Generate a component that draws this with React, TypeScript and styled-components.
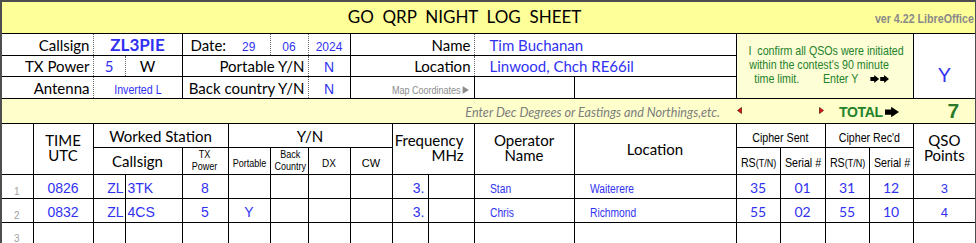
import React from "react";
import styled, { createGlobalStyle, css } from "styled-components";

const CAL = `"Lato", "Carlito", "Open Sans", sans-serif`;
const ARIAL = `"Liberation Sans", Arial, sans-serif`;
const BLUE = "#3131f2";
const GREEN = "#23822a";

type Origin = "left" | "center" | "right";

// Arial Narrow is not installed: squeeze Liberation Sans instead
const narrow = (origin: Origin = "center") => css`
  display: inline-block;
  font-family: ${ARIAL};
  transform: scaleX(0.82);
  transform-origin: ${origin} center;
`;

const GlobalStyle = createGlobalStyle`
  body {
    margin: 0;
    background: #fff;
    font-family: ${CAL};
  }
`;

type Edge = "solid" | "dot" | "none";
type Align = "left" | "center" | "right";

const edge = (e: Edge = "solid") =>
  e === "none" ? "none" : e === "dot" ? "1px dotted #6a6a6a" : "1px solid #000";

const Sheet = styled.table`
  border-collapse: collapse;
  table-layout: fixed;
  width: 976px;
  border: 2px solid #4e4e4e;
`;

const Col = styled.col<{ $w: number }>`
  width: ${(p) => p.$w}px;
`;

const Row = styled.tr<{ $h: number }>`
  height: ${(p) => p.$h}px;
`;

const Cell = styled.td<{
  $r?: Edge;
  $b?: Edge;
  $align?: Align;
  $bg?: string;
  $pl?: number;
  $pr?: number;
  $valign?: "top" | "middle" | "bottom";
}>`
  padding: 0 ${(p) => p.$pr ?? 0}px 0 ${(p) => p.$pl ?? 0}px;
  border-right: ${(p) => edge(p.$r)};
  border-bottom: ${(p) => edge(p.$b)};
  text-align: ${(p) => p.$align ?? "center"};
  vertical-align: ${(p) => p.$valign ?? "middle"};
  background: ${(p) => p.$bg ?? "transparent"};
  white-space: nowrap;
  overflow: hidden;
`;

/* title bar */
const TitleBar = styled.div`
  display: grid;
  grid-template-columns: 1fr auto 1fr;
  align-items: end;
  padding-bottom: 6px;
`;

const Title = styled.span`
  font-family: ${CAL};
  font-size: 17px;
  white-space: pre;
  margin-right: 48px;
  color: #000;
`;

const Version = styled.span`
  justify-self: end;
  ${narrow("right")}
  font-weight: bold;
  font-size: 13px;
  color: #8a8a8a;
  padding-right: 1px;
  padding-bottom: 1px;
`;

/* top form */
const Label = styled.span`
  font-family: ${CAL};
  font-size: 15px;
  color: #000;
`;

const CallSign = styled.span`
  font-family: ${CAL};
  font-weight: bold;
  font-size: 17px;
  color: ${BLUE};
`;

const Entry = styled.span`
  font-family: ${CAL};
  font-size: 15px;
  color: ${BLUE};
`;

const SmallEntry = styled.span`
  font-family: ${ARIAL};
  font-size: 12px;
  color: ${BLUE};
`;

const NarrowEntry = styled.span<{ $size?: number; $origin?: Origin }>`
  ${(p) => narrow(p.$origin)}
  font-size: ${(p) => p.$size ?? 12.5}px;
  color: ${BLUE};
`;

const Hint = styled.span`
  ${narrow("right")}
  font-size: 11px;
  color: #8c8c8c;
`;

const HintInner = styled.span`
  display: inline-flex;
  align-items: center;
  gap: 2px;
`;

const Confirm = styled.div`
  ${narrow("left")}
  display: block;
  font-size: 13px;
  line-height: 14px;
  color: ${GREEN};
  text-align: left;
  padding-left: 14px;
  padding-bottom: 2px;
`;

const ConfirmLine = styled.div<{ $indent?: number }>`
  display: flex;
  align-items: center;
  padding-left: ${(p) => p.$indent ?? 0}px;
  white-space: pre;

  svg {
    flex-shrink: 0;
  }
`;

const BigY = styled.span`
  font-family: ${ARIAL};
  font-size: 20px;
  color: ${BLUE};
`;

const Note = styled.span`
  font-family: ${CAL};
  font-style: italic;
  font-size: 12.6px;
  color: #7c7c7c;
`;

const Markers = styled.div`
  display: flex;
  justify-content: space-between;
  align-items: center;
  padding: 0 1px 0 1px;
`;

const Total = styled.span`
  display: inline-flex;
  align-items: center;
  gap: 2px;
  font-family: ${ARIAL};
  font-weight: bold;
  font-size: 14px;
  letter-spacing: -0.3px;
  color: ${GREEN};
`;

const Score = styled.span`
  font-family: ${ARIAL};
  font-weight: bold;
  font-size: 21px;
  color: #2a7a2a;
`;

/* log table */
const Head = styled.span<{ $align?: Align }>`
  display: inline-block;
  font-family: ${CAL};
  font-size: 15px;
  line-height: 15px;
  text-align: ${(p) => p.$align ?? "center"};
  color: #000;
`;

const SubHead = styled.span<{ $size?: number; $lh?: number }>`
  ${narrow("center")}
  font-size: ${(p) => p.$size ?? 11}px;
  line-height: ${(p) => p.$lh ?? 12}px;
  color: #000;
`;

const ArialHead = styled.span<{ $size?: number }>`
  font-family: ${ARIAL};
  font-size: ${(p) => p.$size ?? 11}px;
  color: #000;
`;

const Smaller = styled.span`
  font-size: 11px;
`;

const RowNum = styled.span`
  font-family: ${ARIAL};
  font-size: 10px;
  color: #a0a0a0;
`;

const Data = styled.span<{ $size?: number }>`
  font-family: ${ARIAL};
  font-size: ${(p) => p.$size ?? 14}px;
  color: ${BLUE};
`;

const Cipher = styled.span`
  font-family: ${CAL};
  font-size: 14px;
  color: ${BLUE};
`;

const BlockArrow = ({ w, h }: { w: number; h: number }) => (
  <svg width={w} height={h} viewBox="0 0 16 12">
    <path d="M0 3h7V0l9 6-9 6V9H0z" fill="#000" />
  </svg>
);

const Marker = ({ dir }: { dir: "left" | "right" }) => (
  <svg width="5" height="7" viewBox="0 0 5 7">
    <path
      d={dir === "left" ? "M4.5 0.5v6L0.5 3.5z" : "M0.5 0.5v6L4.5 3.5z"}
      fill="#e01010"
      stroke="#3a0000"
      strokeWidth="0.6"
    />
  </svg>
);

const HintArrow = () => (
  <svg width="8" height="8" viewBox="0 0 7 7">
    <path d="M0 0l7 3.5L0 7z" fill="#8c8c8c" />
  </svg>
);

const colWidths = [32, 60, 32, 57, 46, 42, 38, 42, 42, 36, 46, 100, 162, 44, 45, 44, 44, 63];

interface QSO {
  time: string;
  prefix: string;
  suffix: string;
  power: string;
  portable: string;
  freq: string;
  operator: string;
  location: string;
  rsSent: string;
  serialSent: string;
  rsRecd: string;
  serialRecd: string;
  points: string;
}

const qsos: QSO[] = [
  {
    time: "0826",
    prefix: "ZL",
    suffix: "3TK",
    power: "8",
    portable: "",
    freq: "3.",
    operator: "Stan",
    location: "Waiterere",
    rsSent: "35",
    serialSent: "01",
    rsRecd: "31",
    serialRecd: "12",
    points: "3",
  },
  {
    time: "0832",
    prefix: "ZL",
    suffix: "4CS",
    power: "5",
    portable: "Y",
    freq: "3.",
    operator: "Chris",
    location: "Richmond",
    rsSent: "55",
    serialSent: "02",
    rsRecd: "55",
    serialRecd: "10",
    points: "4",
  },
];

const LogRow = ({ n, q }: { n: number; q?: QSO }) => (
  <Row $h={24}>
    <Cell $align="left" $valign="bottom" $pl={12}>
      <RowNum>{n}</RowNum>
    </Cell>
    <Cell>
      <Data>{q?.time}</Data>
    </Cell>
    <Cell $align="right" $pr={1}>
      <Data>{q?.prefix}</Data>
    </Cell>
    <Cell $align="left" $pl={2}>
      <Data>{q?.suffix}</Data>
    </Cell>
    <Cell>
      <Data>{q?.power}</Data>
    </Cell>
    <Cell>
      <Data>{q?.portable}</Data>
    </Cell>
    <Cell />
    <Cell />
    <Cell />
    <Cell $align="right" $pr={3}>
      <Data>{q?.freq}</Data>
    </Cell>
    <Cell />
    <Cell $align="left" $pl={15}>
      <NarrowEntry $origin="left">{q?.operator}</NarrowEntry>
    </Cell>
    <Cell $align="left" $pl={15}>
      <NarrowEntry $origin="left">{q?.location}</NarrowEntry>
    </Cell>
    <Cell>
      <Cipher>{q?.rsSent}</Cipher>
    </Cell>
    <Cell>
      <Cipher>{q?.serialSent}</Cipher>
    </Cell>
    <Cell>
      <Cipher>{q?.rsRecd}</Cipher>
    </Cell>
    <Cell>
      <Cipher>{q?.serialRecd}</Cipher>
    </Cell>
    <Cell>
      <Data $size={13}>{q?.points}</Data>
    </Cell>
  </Row>
);

const App: React.FC = () => {
  return (
    <>
      <GlobalStyle />
      <Sheet>
        <colgroup>
          {colWidths.map((w, i) => (
            <Col key={i} $w={w} />
          ))}
        </colgroup>
        <tbody>
          <Row $h={32}>
            <Cell colSpan={18} $bg="#ffff99" $valign="bottom">
              <TitleBar>
                <span />
                <Title>{"GO  QRP  NIGHT  LOG  SHEET"}</Title>
                <Version>ver 4.22 LibreOffice</Version>
              </TitleBar>
            </Cell>
          </Row>

          <Row $h={21}>
            <Cell colSpan={2} $r="dot" $align="right" $pr={3}>
              <Label>Callsign</Label>
            </Cell>
            <Cell colSpan={2}>
              <CallSign>ZL3PIE</CallSign>
            </Cell>
            <Cell $r="none" $align="left" $pl={8}>
              <Label>Date:</Label>
            </Cell>
            <Cell $r="dot">
              <SmallEntry>29</SmallEntry>
            </Cell>
            <Cell $r="dot">
              <SmallEntry>06</SmallEntry>
            </Cell>
            <Cell>
              <SmallEntry>2024</SmallEntry>
            </Cell>
            <Cell colSpan={3} $r="dot" $align="right" $pr={3}>
              <Label>Name</Label>
            </Cell>
            <Cell colSpan={2} $align="left" $pl={15}>
              <Entry>Tim Buchanan</Entry>
            </Cell>
            <Cell colSpan={4} rowSpan={3} $bg="#fdfdd6">
              <Confirm>
                <ConfirmLine>{"I  confirm all QSOs were initiated"}</ConfirmLine>
                <ConfirmLine $indent={1}>within the contest's 90 minute</ConfirmLine>
                <ConfirmLine $indent={7}>
                  {"time limit.        Enter Y    "}
                  <BlockArrow w={12} h={8} />
                  <BlockArrow w={12} h={8} />
                </ConfirmLine>
              </Confirm>
            </Cell>
            <Cell rowSpan={3} $valign="bottom">
              <BigY>Y</BigY>
              <div style={{ height: 11 }} />
            </Cell>
          </Row>

          <Row $h={21}>
            <Cell colSpan={2} $r="dot" $align="right" $pr={3}>
              <Label>TX Power</Label>
            </Cell>
            <Cell $r="dot">
              <Entry>5</Entry>
            </Cell>
            <Cell $pr={12}>
              <Label>W</Label>
            </Cell>
            <Cell colSpan={3} $r="dot" $align="right" $pr={3}>
              <Label>Portable Y/N</Label>
            </Cell>
            <Cell>
              <Data>N</Data>
            </Cell>
            <Cell colSpan={3} $r="dot" $align="right" $pr={3}>
              <Label>Location</Label>
            </Cell>
            <Cell colSpan={2} $align="left" $pl={15}>
              <Entry>Linwood, Chch RE66il</Entry>
            </Cell>
          </Row>

          <Row $h={22}>
            <Cell colSpan={2} $r="dot" $align="right" $pr={3}>
              <Label>Antenna</Label>
            </Cell>
            <Cell colSpan={2}>
              <NarrowEntry $size={13}>Inverted L</NarrowEntry>
            </Cell>
            <Cell colSpan={3} $r="dot" $align="right" $pr={3}>
              <Label>Back country Y/N</Label>
            </Cell>
            <Cell>
              <Data>N</Data>
            </Cell>
            <Cell colSpan={3} $align="right" $pr={5}>
              <Hint>
                <HintInner>
                  Map Coordinates
                  <HintArrow />
                </HintInner>
              </Hint>
            </Cell>
            <Cell />
            <Cell />
          </Row>

          <Row $h={23}>
            <Cell colSpan={13} $r="none" $align="right" $pr={16} $bg="#ffffcc">
              <Note>Enter Dec Degrees or Eastings and Northings,etc.</Note>
            </Cell>
            <Cell colSpan={2} $r="none" $bg="#ffffcc">
              <Markers>
                <Marker dir="left" />
                <Marker dir="right" />
              </Markers>
            </Cell>
            <Cell colSpan={2} $r="none" $align="left" $pl={14} $bg="#ffffcc">
              <Total>
                TOTAL
                <BlockArrow w={14} h={12} />
              </Total>
            </Cell>
            <Cell $align="right" $pr={16} $bg="#ffffcc">
              <Score>7</Score>
            </Cell>
          </Row>

          <Row $h={24}>
            <Cell rowSpan={2} />
            <Cell rowSpan={2}>
              <Head>
                TIME
                <br />
                UTC
              </Head>
            </Cell>
            <Cell colSpan={3}>
              <Head>Worked Station</Head>
            </Cell>
            <Cell colSpan={4}>
              <Head>Y/N</Head>
            </Cell>
            <Cell colSpan={2} rowSpan={2} $align="right" $pr={10}>
              <Head $align="right">
                Frequency
                <br />
                MHz
              </Head>
            </Cell>
            <Cell rowSpan={2}>
              <Head>
                Operator
                <br />
                Name
              </Head>
            </Cell>
            <Cell rowSpan={2}>
              <Head>Location</Head>
            </Cell>
            <Cell colSpan={2}>
              <SubHead $size={13}>Cipher Sent</SubHead>
            </Cell>
            <Cell colSpan={2}>
              <SubHead $size={13}>Cipher Rec'd</SubHead>
            </Cell>
            <Cell rowSpan={2}>
              <Head>
                QSO
                <br />
                Points
              </Head>
            </Cell>
          </Row>

          <Row $h={27}>
            <Cell colSpan={2}>
              <Head>Callsign</Head>
            </Cell>
            <Cell>
              <SubHead $size={11} $lh={12}>
                TX
                <br />
                Power
              </SubHead>
            </Cell>
            <Cell>
              <SubHead $size={11}>Portable</SubHead>
            </Cell>
            <Cell>
              <SubHead $size={11}>
                Back
                <br />
                Country
              </SubHead>
            </Cell>
            <Cell>
              <ArialHead $size={10}>DX</ArialHead>
            </Cell>
            <Cell>
              <ArialHead $size={11}>CW</ArialHead>
            </Cell>
            <Cell>
              <SubHead $size={13}>
                RS<Smaller>(T/N)</Smaller>
              </SubHead>
            </Cell>
            <Cell>
              <SubHead $size={13}>Serial #</SubHead>
            </Cell>
            <Cell>
              <SubHead $size={13}>
                RS<Smaller>(T/N)</Smaller>
              </SubHead>
            </Cell>
            <Cell>
              <SubHead $size={13}>Serial #</SubHead>
            </Cell>
          </Row>

          {qsos.map((q, i) => (
            <LogRow key={i} n={i + 1} q={q} />
          ))}
          <LogRow n={3} />
        </tbody>
      </Sheet>
    </>
  );
};

export default App;
